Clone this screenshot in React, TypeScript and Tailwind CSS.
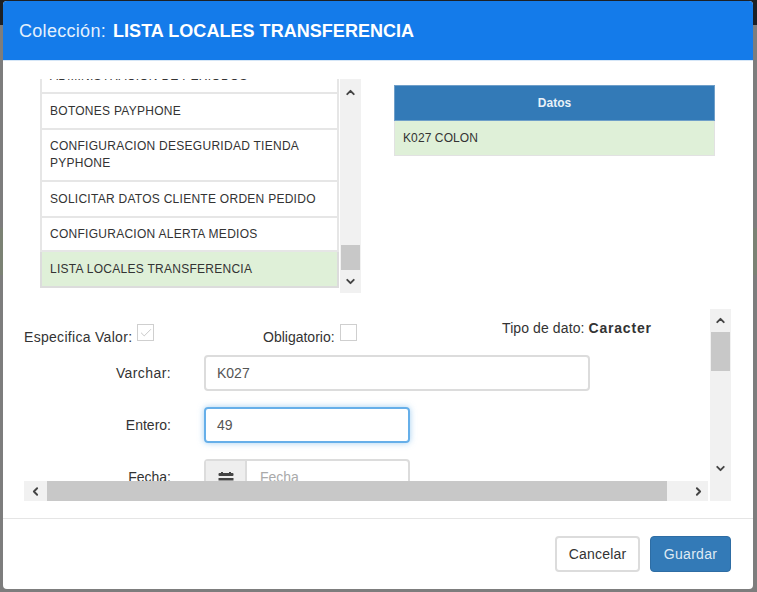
import { ChevronDown, ChevronLeft, ChevronRight, ChevronUp, Check } from 'lucide-react'

const listItems = [
  { label: 'BOTONES PAYPHONE', h: 'h-[36px]' },
  { label: 'CONFIGURACION DESEGURIDAD TIENDA PYPHONE', h: 'h-[52px]' },
  { label: 'SOLICITAR DATOS CLIENTE ORDEN PEDIDO', h: 'h-[36px]' },
  { label: 'CONFIGURACION ALERTA MEDIOS', h: 'h-[34px]' },
]

function Arrow({ className, children }: { className: string; children: React.ReactNode }) {
  return <div className={`flex shrink-0 items-center text-[#444] ${className}`}>{children}</div>
}

function CalendarGlyph() {
  // only the top of the icon shows above the scroll edge
  return (
    <svg width="16" height="16" viewBox="0 0 16 16" className="mt-[2px] text-[#444]" fill="currentColor">
      <rect x="3" y="0" width="2" height="2" />
      <rect x="11" y="0" width="2" height="2" />
      <rect x="0.5" y="1" width="15" height="3" rx="1" />
      <rect x="0.5" y="6" width="15" height="2.5" />
      <rect x="0.5" y="10" width="15" height="5" rx="1" />
    </svg>
  )
}

export default function App() {
  return (
    <div className="relative h-[592px] w-[757px] overflow-hidden bg-[#7d7d7d] font-['Liberation_Sans',Arial,sans-serif] text-[#333]">
      {/* page behind the dimmed backdrop */}
      <div className="absolute inset-x-0 top-0 h-[25px] bg-[#1d2025]" />
      <div className="absolute inset-x-0 top-[228px] h-[47px] bg-[#7b8274]" />

      <div className="relative ml-[3px] mt-[1px] flex h-[588px] w-[750px] flex-col overflow-hidden rounded-[4px] bg-white">
        <div className="flex h-[60px] shrink-0 items-center border-b border-[#d5e6f7] bg-[#147bea] pl-[16px] pt-[1px] text-[18px] text-[#e3f0fd]">
          <span className="tracking-[0.3px]">Colección:</span>
          <b className="ml-[7px] tracking-[0.04px] text-white">LISTA LOCALES TRANSFERENCIA</b>
        </div>

        <div className="ml-[37px] mt-[18px] flex h-[214px] shrink-0">
          <div className="flex w-[322px]">
            <div className="h-[214px] w-[299px] overflow-hidden text-[12px] leading-[17px] tracking-[0.27px]">
              <div className="-mt-[20px] flex h-[35px] items-center border-2 border-[#e6e6e6] px-[8px]">
                ADMINISTRACION DE PERIODOS
              </div>
              {listItems.map((item) => (
                <div key={item.label} className={`flex items-center border-x-2 border-b-2 border-[#e6e6e6] px-[8px] ${item.h}`}>
                  {item.label}
                </div>
              ))}
              <div className="flex h-[36px] items-center border-2 border-t-0 border-[#dcdcdc] bg-[#dff0d8] px-[8px]">
                LISTA LOCALES TRANSFERENCIA
              </div>
            </div>
            <div className="ml-[1px] flex h-[214px] w-[21px] flex-col bg-[#f1f1f1]">
              <Arrow className="h-[26px] justify-center"><ChevronUp size={13} strokeWidth={3.5} /></Arrow>
              <div className="flex-1" />
              <div className="mx-[1px] h-[25px] bg-[#c8c8c8]" />
              <Arrow className="h-[23px] justify-center"><ChevronDown size={13} strokeWidth={3.5} /></Arrow>
            </div>
          </div>

          <div className="ml-[32px] mt-[6px] h-[72px] w-[321px] text-[12px]">
            <div className="flex h-[36px] items-center justify-center border border-[#6f9fc9] bg-[#337ab7] font-bold text-[#e8f1f8]">
              Datos
            </div>
            <div className="flex h-[35px] items-center border-x border-b border-[#e2e2e2] bg-[#dff0d8] px-[8px] tracking-[0.1px]">K027 COLON</div>
          </div>
        </div>

        <div className="ml-[21px] mt-[16px] flex h-[192px] w-[707px] shrink-0 justify-between">
          <div className="flex w-[684px] flex-col">
            <div className="h-[172px] overflow-hidden text-[14px]">
              <div className="flex h-[46px] items-start pt-[15px]">
                <div className="flex w-[239px]">
                  <span className="mt-[3px] tracking-[0.3px]">Especifica Valor:</span>
                  <span className="ml-[5px] flex size-[17px] items-center justify-center border border-[#cfcfcf] text-[#c0c0c0]">
                    <Check size={14} strokeWidth={1.5} />
                  </span>
                </div>
                <div className="flex w-[239px]">
                  <span className="mt-[3px]">Obligatorio:</span>
                  <span className="ml-[5px] size-[17px] border border-[#cfcfcf]" />
                </div>
                <div className="-mt-[6px] tracking-[0.1px]">
                  Tipo de dato: <b className="tracking-[0.8px]">Caracter</b>
                </div>
              </div>

              <div className="flex items-center">
                <label className="w-[147px] pt-[1px] text-right tracking-[0.4px]">Varchar:</label>
                <div className="ml-[33px] flex h-[36px] w-[386px] items-center rounded-[4px] border-2 border-[#dcdcdc] pl-[11px] pt-[1px] text-[#555]">K027</div>
              </div>
              <div className="mt-[16px] flex items-center">
                <label className="w-[147px] pt-[1px] text-right">Entero:</label>
                <div className="ml-[33px] flex h-[36px] w-[206px] items-center rounded-[4px] border-2 border-[#66afe9] pl-[11px] pt-[1px] text-[#555] shadow-[0_0_6px_rgba(102,175,233,0.6)]">49</div>
              </div>
              <div className="mt-[16px] flex items-center">
                <label className="w-[147px] pt-[1px] text-right">Fecha:</label>
                <div className="ml-[33px] flex h-[36px] w-[206px] rounded-[4px] border-2 border-[#dcdcdc]">
                  <span className="flex w-[41px] items-start justify-center border-r-2 border-[#dcdcdc] bg-[#eee] pt-[9px]">
                    <CalendarGlyph />
                  </span>
                  <span className="flex items-center pl-[13px] pt-[1px] text-[#aaa]">Fecha</span>
                </div>
              </div>
            </div>
            <div className="flex h-[20px] bg-[#f1f1f1]">
              <Arrow className="w-[23px] justify-center"><ChevronLeft size={13} strokeWidth={3.5} /></Arrow>
              <div className="h-[20px] w-[620px] shrink-0 bg-[#c8c8c8]" />
              <Arrow className="flex-1 justify-end pr-[3px]"><ChevronRight size={13} strokeWidth={3.5} /></Arrow>
            </div>
          </div>

          <div className="flex h-[192px] w-[21px] flex-col bg-[#f1f1f1]">
            <Arrow className="h-[23px] justify-center"><ChevronUp size={13} strokeWidth={3.5} /></Arrow>
            <div className="mx-[1px] h-[39px] bg-[#c8c8c8]" />
            <div className="flex-1" />
            <Arrow className="mb-[23px] h-[20px] justify-center"><ChevronDown size={13} strokeWidth={3.5} /></Arrow>
          </div>
        </div>

        <div className="mt-[17px] h-[1px] shrink-0 bg-[#e5e5e5]" />

        <div className="flex justify-end gap-[10px] pr-[22px] pt-[17px] text-[14px]">
          <button className="h-[36px] w-[85px] rounded-[4px] border-2 border-[#dcdcdc] bg-white tracking-[0.2px]">Cancelar</button>
          <button className="h-[36px] w-[81px] rounded-[4px] border border-[#2e6da4] bg-[#337ab7] tracking-[0.3px] text-[#dfeaf4]">Guardar</button>
        </div>
      </div>
    </div>
  )
}
